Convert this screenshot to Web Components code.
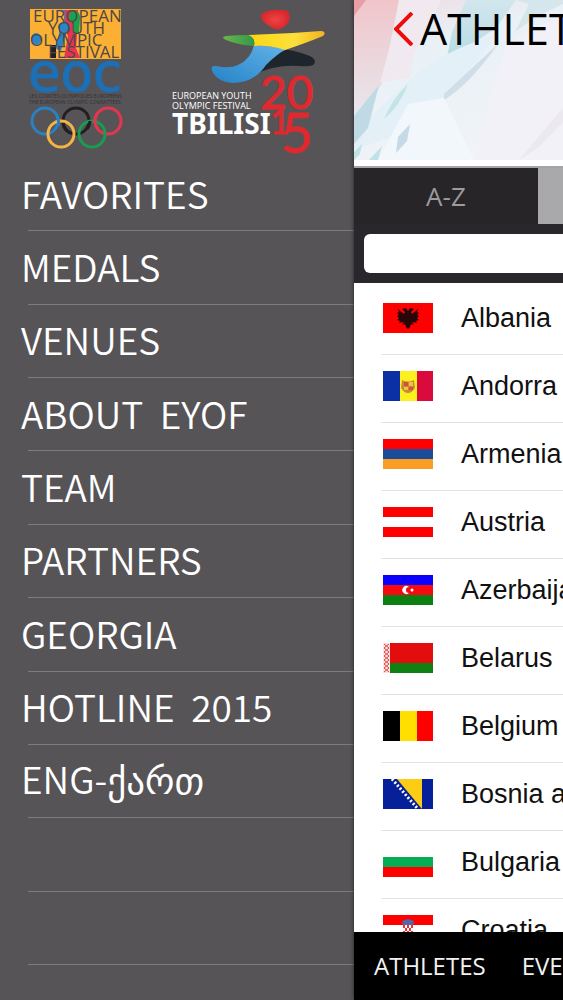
<!DOCTYPE html>
<html lang="en">
<head>
	<meta charset="UTF-8">
	<meta name="viewport" content="width=device-width, initial-scale=1">
	<title>Tbilisi 2015</title>
<style>
	body{margin:0;background:#565457;font-family:"Open Sans","Noto Sans","DejaVu Sans",sans-serif}
	.geo{font-family:"DejaVu Sans",sans-serif;font-weight:400}
</style>
</head>
<body>

<app-shell>
	<side-drawer slot="drawer">
		<event-logos slot="logos"></event-logos>
		<menu-item>FAVORITES</menu-item>
		<menu-item>MEDALS</menu-item>
		<menu-item>VENUES</menu-item>
		<menu-item>ABOUT  EYOF</menu-item>
		<menu-item>TEAM</menu-item>
		<menu-item>PARTNERS</menu-item>
		<menu-item>GEORGIA</menu-item>
		<menu-item>HOTLINE  2015</menu-item>
		<menu-item>ENG-<span class="geo" lang="ka">ქართ</span></menu-item>
		<menu-item></menu-item>
		<menu-item></menu-item>
	</side-drawer>
	<page-header>ATHLETES</page-header>
	<filter-tabs>A-Z</filter-tabs>
	<search-bar></search-bar>
	<country-list>
		<country-row flag="al">Albania</country-row>
		<country-row flag="ad">Andorra</country-row>
		<country-row flag="am">Armenia</country-row>
		<country-row flag="at">Austria</country-row>
		<country-row flag="az">Azerbaijan</country-row>
		<country-row flag="by">Belarus</country-row>
		<country-row flag="be">Belgium</country-row>
		<country-row flag="ba">Bosnia and Herzegovina</country-row>
		<country-row flag="bg">Bulgaria</country-row>
		<country-row flag="hr">Croatia</country-row>
	</country-list>
	<bottom-bar>
		<a href="#athletes">ATHLETES</a>
		<a href="#events">EVENTS</a>
	</bottom-bar>
</app-shell>

<template id="app-shell">
	<style>
		:host{display:flex;height:100vh;overflow:hidden}
		slot[name=drawer]::slotted(*){flex:0 0 354px}
		main{display:flex;flex-direction:column;flex:0 0 98vw;background:#fff;box-shadow:0 0 4px #222}
	</style>
	<slot name="drawer"></slot>
	<main><slot></slot></main>
</template>

<template id="side-drawer">
	<style>
		:host{display:flex;flex-direction:column;background:#565457;color:#fff}
		nav{flex:1;display:grid;grid-auto-rows:1fr;padding-bottom:35px}
	</style>
	<slot name="logos"></slot>
	<nav><slot></slot></nav>
</template>

<template id="menu-item">
	<style>
		:host{display:block;min-height:0}
		a{display:flex;align-items:center;height:100%;box-sizing:border-box;padding:0 0 4px 21px;color:inherit;text-decoration:none;
			font-family:"Noto Sans CJK SC","DejaVu Sans",sans-serif;font-size:37px;line-height:52px;font-weight:350;white-space:pre;
			background:linear-gradient(#7d7b7e,#7d7b7e) 28px 100%/100% 1px no-repeat}
	</style>
	<a href="#"><span><slot></slot></span></a>
</template>

<template id="event-logos">
	<style>
		:host{display:block;height:158px}
		svg{display:block}
	</style>
	<svg width="354" height="158" viewBox="0 0 354 158">
		<!-- EOC -->
		<rect x="30" y="9" width="91" height="50" fill="#fbb034"/>
		<path d="M57 10q8 0 7 8l-1 6q-4 3-4 10l-4 14 6 3 5-17V10z" fill="#2b86c8"/>
		<path d="M65 10h13v10l-1 14-1 14 4 10H64l4-22q-5-8-3-14z" fill="#e9344f"/>
		<path d="M69 17q0-6 6-6 5 0 5 7l-1 15h-6V24q-4-2-4-7z" fill="#17a250"/>
		<path d="M50 45h6v13h-6z" fill="#231f20"/>
		<ellipse cx="36" cy="39" rx="5" ry="6" fill="#2b86c8"/>
		<ellipse cx="64" cy="27" rx="6" ry="5" fill="#2b86c8"/>
		<g fill="#4c4747" font-size="17">
			<text x="33" y="22">EUROPEAN</text>
			<text x="48" y="34">YOUTH</text>
			<text x="30" y="46">OLYMPIC</text>
			<text x="48" y="58">FESTIVAL</text>
		</g>
		<text x="28" y="91" font-family="DejaVu Sans" font-size="53" fill="#1b70b8" stroke="#1b70b8">eoc</text>
		<g fill="#343234" font-size="5">
			<text x="29" y="98">LES COMITÉS OLYMPIQUES EUROPÉENS</text>
			<text x="29" y="104">THE EUROPEAN OLYMPIC COMMITTEES</text>
		</g>
		<g fill="none" stroke-width="3">
			<circle cx="45" cy="121" r="13" stroke="#2b7fc3"/>
			<circle cx="76" cy="121" r="13" stroke="#231f20"/>
			<circle cx="108" cy="121" r="13" stroke="#e5364f"/>
			<circle cx="61" cy="134" r="13" stroke="#f5b443"/>
			<circle cx="92" cy="134" r="13" stroke="#1b9b50"/>
			<path d="M57 116a13 13 0 0 1 1 10" stroke="#2b7fc3"/>
			<path d="M63 123a13 13 0 0 0 7 10M90 121a13 13 0 0 1-3 8" stroke="#231f20"/>
			<path d="M97 114a13 13 0 0 0-2 9" stroke="#e5364f"/>
		</g>
		<!-- Tbilisi 2015 -->
		<defs>
			<linearGradient id="blue" x1="0" y1="1" x2="1" y2="0"><stop offset="0" stop-color="#2583c7"/><stop offset="1" stop-color="#63b3e8"/></linearGradient>
			<linearGradient id="yellow"><stop offset="0" stop-color="#fbd514"/><stop offset=".6" stop-color="#fce03a"/><stop offset="1" stop-color="#f0b323"/></linearGradient>
			<linearGradient id="green"><stop offset="0" stop-color="#68b846"/><stop offset="1" stop-color="#32984c"/></linearGradient>
			<radialGradient id="red"><stop offset="0" stop-color="#ef4444"/><stop offset="1" stop-color="#d9272d"/></radialGradient>
		</defs>
		<path d="M261 16q1-5 13-6 13-1 15 3 3 8-5 14-6 5-13 0-10-5-10-11z" fill="url(#red)"/>
		<path d="M284 49q22 4 29 9 4 4 0 7-4 2-13 1-28-2-50 11 12-21 34-28z" fill="#1e252d"/>
		<path d="M254 45q18 1 33 4-9 4-21 16-12 18-34 18-13-1-19-10-4-8 3-7 14 3 22-1 13-6 16-20z" fill="url(#blue)"/>
		<path d="M248 35q38-1 73-4 6 1 2 5-17 7-38 14-16-5-31-4 2-8-6-11z" fill="url(#yellow)"/>
		<path d="M226 36q11-1 22-1 8 3 6 11-16-1-28-6-6-3 0-4z" fill="url(#green)"/>
		<g fill="#fff">
			<text x="172" y="99" font-size="9">EUROPEAN YOUTH</text>
			<text x="172" y="109" font-size="9">OLYMPIC FESTIVAL</text>
			<text x="172" y="134" font-size="28" font-weight="700" font-family="Noto Sans">TBILISI</text>
		</g>
		<g fill="#de2a2f" stroke="#de2a2f" font-family="Lato">
			<text x="260" y="109" font-size="46">20</text>
			<text x="270" y="134" font-size="34">1</text>
			<text x="281" y="153" font-size="56">5</text>
		</g>
	</svg>
</template>

<template id="page-header">
	<style>
		:host{display:grid;height:166px;border-bottom:2px solid #a5a4a6;overflow:hidden}
		.art,.bar{grid-area:1/1}
		.art{display:block;width:100%;height:160px}
		.bar{display:flex;align-items:center;align-self:start;gap:7px;height:58px;padding-left:40px}
		button{display:flex;padding:0;border:0;background:none}
		h1{margin:0;font-size:43px;line-height:60px;font-weight:400;color:#000}
	</style>
	<svg class="art" viewBox="0 0 552 160" preserveAspectRatio="xMinYMin slice">
		<defs>
			<linearGradient id="sky" x1="0" y1="0" x2="1" y2="1"><stop offset="0" stop-color="#edd8df"/><stop offset=".2" stop-color="#e9f1f6"/><stop offset="1" stop-color="#f7f5f8"/></linearGradient>
			<linearGradient id="pink" x1="0" y1="0" x2="0" y2="1"><stop offset="0" stop-color="#f0c5ca"/><stop offset="1" stop-color="#e6eaf0"/></linearGradient>
			<linearGradient id="teal" x1="0" y1="0" x2="0" y2="1"><stop offset="0" stop-color="#d3e6ee"/><stop offset="1" stop-color="#b3dbe3"/></linearGradient>
		</defs>
		<rect width="552" height="160" fill="url(#sky)"/>
		<path d="M0 0h45L28 84 0 124z" fill="url(#pink)"/>
		<path d="M0 0h12L0 16z" fill="#ea9da6"/>
		<path d="M45 0h42L60 55 56 78 26 82 38 40z" fill="#f0eaf0"/>
		<path d="M112 0h50l-20 28-30 20-20 14 6-30z" fill="url(#teal)"/>
		<path d="M162 0h47v4q-28 12-48 28l14-28z" fill="#d5e6ed"/>
		<path d="M60 76Q98 46 142 36L88 104 40 136 0 150v-18z" fill="#e4f0f7"/>
		<path d="M144 44Q116 84 90 100v-6z" fill="#d0dee8"/>
		<path d="M152 44l57-30v146h-90z" fill="#f1f1f7"/>
		<path d="M54 104l36-6 30 62H24z" fill="#f1f7fa"/>
		<path d="M25 85L14 128 0 144v-28z" fill="#bfdae4"/>
		<path d="M54 84q-8 22-24 35 8-20 24-35z" fill="#c3e4e5"/>
		<path d="M56 124l-3 17-11 12 2-16z" fill="#c5dae6"/>
		<path d="M8 144l-2 10-6 6v-8zM28 146l-4 14h-9z" fill="#bfe2e6"/>
		<path d="M209 108v14l-24 25-20 13z" fill="#ece9ee"/>
	</svg>
	<div class="bar">
		<button aria-label="Back">
			<svg width="19" height="34" viewBox="0 0 19 34"><path d="M18 1 2 17l16 16" fill="none" stroke="#ee0b0b" stroke-width="4"/></svg>
		</button>
		<h1><slot></slot></h1>
	</div>
</template>

<template id="filter-tabs">
	<style>
		:host{display:grid;grid-template-columns:repeat(3,1fr);height:56px}
		button{border:0;padding:0;background:#a9a8aa;font:26px "Open Sans",sans-serif;color:#9d9b9d}
		.on{background:#272528}
	</style>
	<button class="on"><slot></slot></button>
	<button aria-label="Sport"></button>
	<button aria-label="Venue"></button>
</template>

<template id="search-bar">
	<style>
		:host{display:block;padding:10px;background:#29272b}
		input{display:block;width:100%;height:39px;box-sizing:border-box;border:0;border-radius:6px;padding:0 12px;background:#fff;font-size:24px}
	</style>
	<input type="search" aria-label="Search">
</template>

<template id="country-list">
	<style>
		:host{display:block;flex:1;min-height:0;overflow:hidden;padding:3px 0 0 27px}
	</style>
	<slot></slot>
</template>

<template id="country-row">
	<style>
		:host{display:flex;align-items:center;gap:28px;height:68px;box-sizing:border-box;padding:0 0 4px 2px;
			font:27px/32px "Liberation Sans",Arial,sans-serif;color:#111;white-space:nowrap;
			background:linear-gradient(#e3e3e6,#e3e3e6) 0 0/100% 1px no-repeat}
		:host(:first-child){background:none}
		svg{flex:none;display:block}
	</style>
	<svg width="50" height="30" viewBox="0 0 50 30"></svg>
	<span><slot></slot></span>
</template>

<template id="bottom-bar">
	<style>
		:host{display:flex;align-items:center;gap:36px;height:68px;padding-left:20px;background:#000}
		::slotted(a){color:#f2f2f2;font-size:24px;line-height:32px;text-decoration:none}
	</style>
	<slot></slot>
</template>

<script>
//flag drawings, 50x30 each
const bands = (...c) => c.map((v, i) => `<rect y="${i * 10}" width="50" height="10" fill="${v}"/>`).join('');
const bars = (...c) => c.map((v, i) => `<rect x="${i * 17}" width="17" height="30" fill="${v}"/>`).join('');
const flags = {
	al: '<rect width="50" height="30" fill="#fe0000"/><path d="M25 8l-2-3-4 1 3 3-1 2-6-5 1 3-2 1 2 2-2 1 2 2-2 2 3 1-1 2 5-1-2 3 3-1 1 3 2 2 2-2 1-3 3 1-2-3 5 1-1-2 3-1-2-2 2-2-2-1 2-2-2-1 1-3-6 5-1-2 3-3-4-1z" fill="#260606"/>',
	ad: bars('#0b2fa4', '#fdf01f', '#d80b3c') + '<path d="M19 9q6 3 12 0l1 8q-3 5-7 5t-7-5z" fill="#c78a3c"/><path d="M21 11h4v4h-4zM26 16h4v3h-4z" fill="#d64f36"/><path d="M26 11h4v4h-4zM21 16h4v3h-4z" fill="#f0c040"/>',
	am: bands('#fe0000', '#1b4c9c', '#f99d27'),
	at: bands('#fe0000', '#fff', '#fe0000'),
	az: bands('#0b00fb', '#f50a12', '#0b8011') + '<path d="M26 12a4 4 0 1 0 0 6 3 3 0 1 1 0-6z" fill="#fff"/><circle cx="29" cy="15" r="1.5" fill="#fff"/>',
	by: '<rect width="50" height="20" fill="#e40d0d"/><rect y="20" width="50" height="10" fill="#108013"/><rect width="7" height="30" fill="#fbe4e2"/><path d="M1 1l5 4-5 4 5 4-5 4 5 4-5 4 5 4M6 1L1 5l5 4-5 4 5 4-5 4 5 4-5 4" fill="none" stroke="#de4444"/>',
	be: bars('#000', '#fedf00', '#fe0000'),
	ba: '<rect width="50" height="30" fill="#06209a"/><path d="M14 0h25v30z" fill="#fdcc14"/><path d="M9 0l26 30" stroke="#fff" stroke-width="3" stroke-dasharray="2 2"/>',
	bg: bands('#fff', '#05ad54', '#fe0000'),
	hr: bands('#fe0000', '#fff', '#17179a') + '<path d="M20 10h10v10q-1 4-5 5-4-1-5-5z" fill="#fff"/><path d="M20 10h2v3h-2zM24 10h2v3h-2zM28 10h2v3h-2zM22 13h2v3h-2zM26 13h2v3h-2zM20 16h2v3h-2zM24 16h2v3h-2zM28 16h2v3h-2z" fill="#f03030"/><path d="M19 6l3-1 3-1 3 1 3 1-1 4H20z" fill="#5268a8"/>'
};

//every element clones the template of its own name
class BaseElement extends HTMLElement {
	constructor() {
		super();
		const template = document.getElementById(this.localName);
		this.attachShadow({ mode: 'open' }).appendChild(template.content.cloneNode(true));
	}
}

class CountryRow extends BaseElement {
	connectedCallback() {
		this.shadowRoot.querySelector('svg').innerHTML = flags[this.getAttribute('flag')] || '';
	}
}

['app-shell', 'side-drawer', 'menu-item', 'event-logos', 'page-header', 'filter-tabs', 'search-bar', 'country-list', 'bottom-bar'].forEach(name => {
	customElements.define(name, class extends BaseElement {});
});
customElements.define('country-row', CountryRow);
</script>

</body>
</html>
